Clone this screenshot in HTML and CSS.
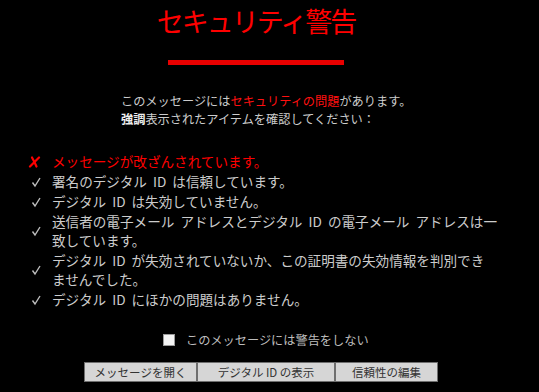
FILE: index.html
```html
<!DOCTYPE html>
<html lang="ja">
<head>
<meta charset="utf-8">
<title>セキュリティ警告</title>
<link rel="stylesheet" href="styles.css">
</head>
<body>
<div class="header">
  <h1 class="title">セキュリティ警告</h1>
  <div class="rule"></div>
</div>
<p class="intro">このメッセージには<span class="red">セキュリティの問題</span>があります。<br><strong>強調</strong>表示されたアイテムを確認してください：</p>
<ul class="list">
  <li class="bad">
    <span class="icon"><svg width="13" height="12" viewBox="0 0 13 12"><path d="M4 1.5 Q6.5 6 8.5 10.5" fill="none" stroke="#f00" stroke-width="2.2" stroke-linecap="round"/><path d="M11 1.5 L2 10.5" fill="none" stroke="#f00" stroke-width="2.2" stroke-linecap="round"/></svg></span>
    <span class="text">メッセージが改ざんされています。</span>
  </li>
  <li>
    <span class="icon"><svg width="13" height="12" viewBox="0 0 13 12"><path d="M4.5 6.5 L7 10 L12 2" fill="none" stroke="#bdbdbd" stroke-width="1.4"/></svg></span>
    <span class="text">署名のデジタル ID は信頼しています。</span>
  </li>
  <li>
    <span class="icon"><svg width="13" height="12" viewBox="0 0 13 12"><path d="M4.5 6.5 L7 10 L12 2" fill="none" stroke="#bdbdbd" stroke-width="1.4"/></svg></span>
    <span class="text">デジタル ID は失効していません。</span>
  </li>
  <li>
    <span class="icon"><svg width="13" height="12" viewBox="0 0 13 12"><path d="M4.5 6.5 L7 10 L12 2" fill="none" stroke="#bdbdbd" stroke-width="1.4"/></svg></span>
    <span class="text">送信者の電子メール アドレスとデジタル ID の電子メール アドレスは一<br>致しています。</span>
  </li>
  <li>
    <span class="icon"><svg width="13" height="12" viewBox="0 0 13 12"><path d="M4.5 6.5 L7 10 L12 2" fill="none" stroke="#bdbdbd" stroke-width="1.4"/></svg></span>
    <span class="text">デジタル ID が失効されていないか、この証明書の失効情報を判別でき<br>ませんでした。</span>
  </li>
  <li>
    <span class="icon"><svg width="13" height="12" viewBox="0 0 13 12"><path d="M4.5 6.5 L7 10 L12 2" fill="none" stroke="#bdbdbd" stroke-width="1.4"/></svg></span>
    <span class="text">デジタル ID にほかの問題はありません。</span>
  </li>
</ul>
<label class="optout"><span class="box"></span><span>このメッセージには警告をしない</span></label>
<div class="buttons">
  <button class="btn b1">メッセージを開く</button>
  <button class="btn b2">デジタル ID の表示</button>
  <button class="btn b3">信頼性の編集</button>
</div>
</body>
</html>
```
FILE: styles.css
```css
html, body {
  margin: 0;
  padding: 0;
}
body {
  background: #000;
  width: 539px;
  height: 392px;
  overflow: hidden;
  font-family: "Noto Sans CJK JP", "Liberation Sans", sans-serif;
  color: #cccccc;
}
.header {
  width: 512px;
  text-align: center;
  padding-top: 4px;
}
.title {
  margin: 0;
  font-size: 27px;
  line-height: 34px;
  font-weight: normal;
  color: #f00;
  letter-spacing: -2px;
}
.rule {
  width: 176px;
  height: 5px;
  background: #e80000;
  margin: 22px auto 0;
}
.intro {
  margin: 27px 0 0 121px;
  font-size: 12.2px;
  line-height: 18px;
}
.intro strong {
  color: #eeeeee;
}
.red {
  color: #ff1010;
}
.list {
  list-style: none;
  margin: 24px 0 0;
  padding: 0;
}
.list li {
  display: flex;
  align-items: center;
  margin-bottom: 1px;
}
.icon {
  width: 13px;
  height: 12px;
  margin-left: 28px;
  margin-right: 11px;
  display: flex;
}
.text {
  font-size: 13.6px;
  line-height: 19px;
  word-spacing: 3px;
}
.bad .text {
  color: #f00;
}
.optout {
  display: flex;
  align-items: center;
  margin: 22px 0 0 163px;
  font-size: 12.2px;
  line-height: 18px;
  color: #bdbdbd;
}
.box {
  width: 10px;
  height: 10px;
  background: #f4f4f4;
  border: 1px solid #9a9a9a;
  margin-right: 11px;
}
.buttons {
  display: flex;
  margin: 13px 0 0 84px;
}
.btn {
  height: 20px;
  padding: 0;
  margin: 0;
  background: #d6d6d6;
  border: 1px solid #6f6f6f;
  font-family: "Noto Sans CJK JP", sans-serif;
  font-size: 11.5px;
  color: #333;
}
.b1 { width: 113px; }
.b2 { width: 138px; }
.b3 { width: 103px; }
```
